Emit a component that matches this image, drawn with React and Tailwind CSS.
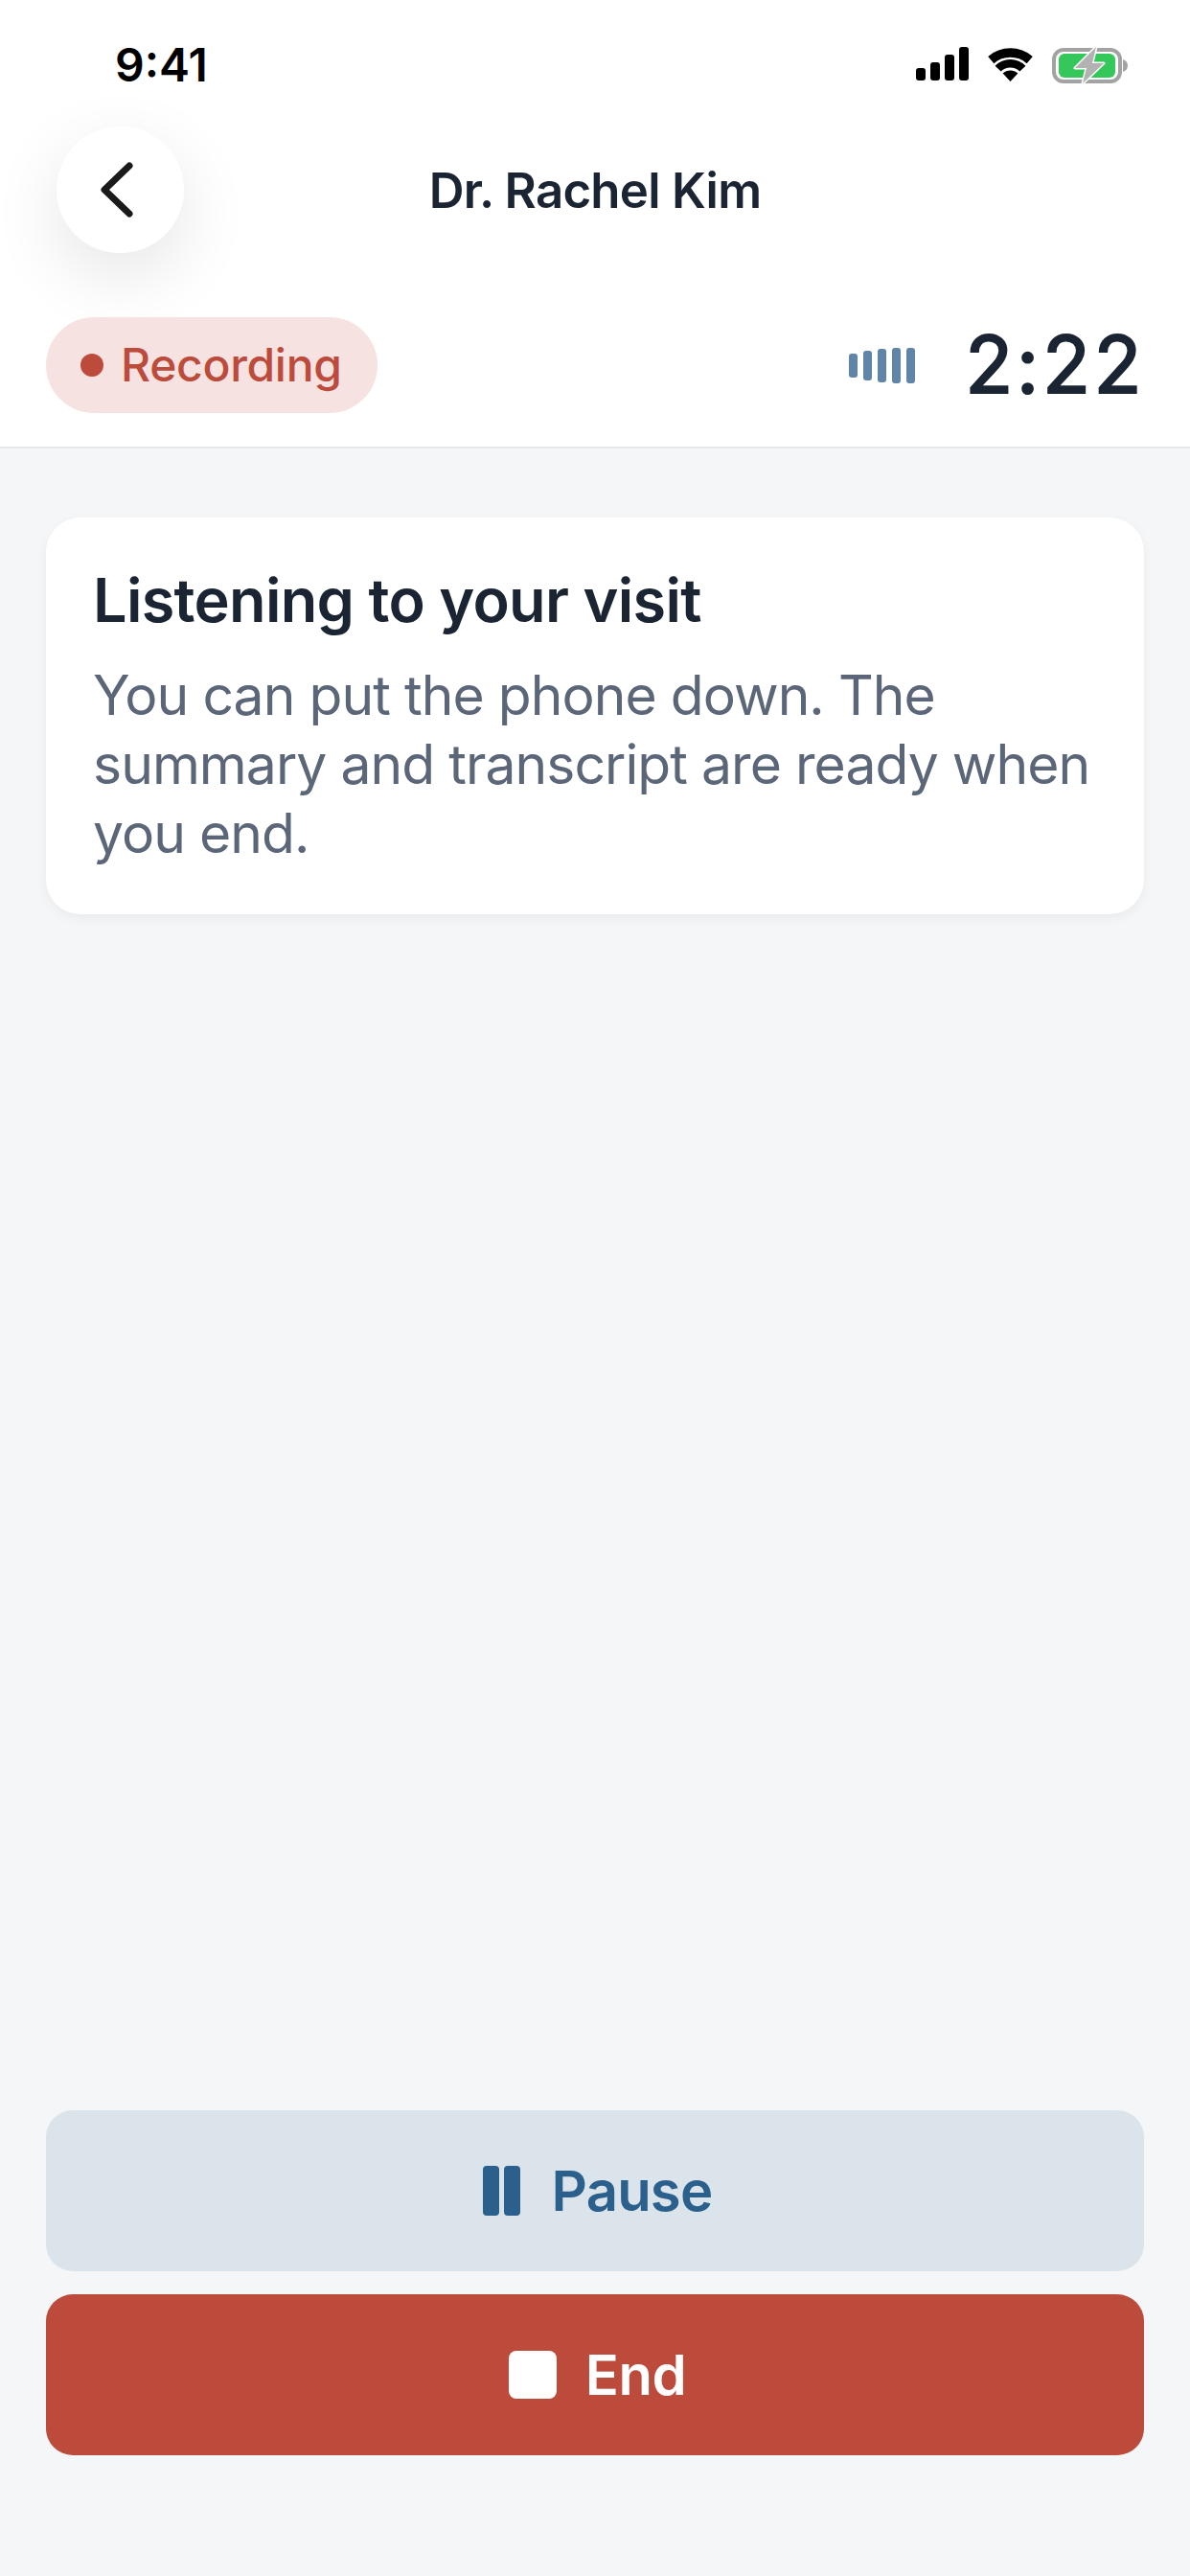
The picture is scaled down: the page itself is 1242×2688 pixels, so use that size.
import React from 'react';

const font = "font-['Inter','Liberation_Sans',sans-serif]";

const SignalIcon = () => (
    <svg width="55" height="36" viewBox="0 0 55 36" fill="#000">
        <rect x="0" y="22" width="10" height="13" rx="3" />
        <rect x="15" y="16" width="10" height="19" rx="3" />
        <rect x="30" y="8" width="10" height="27" rx="3" />
        <rect x="45" y="0" width="10" height="35" rx="3" />
    </svg>
);

const WifiIcon = () => (
    <svg width="47" height="36" viewBox="0 0 47 36" fill="none" stroke="#000">
        <path d="M3.3 13.6 A31 31 0 0 1 43.7 13.6" strokeWidth="9.5" />
        <path d="M10.6 22.6 A18 18 0 0 1 36.4 22.6" strokeWidth="8.5" />
        <path d="M23.5 36 L15.6 27.6 A11.5 11.5 0 0 1 31.4 27.6 Z" fill="#000" stroke="none" />
    </svg>
);

const BatteryIcon = () => (
    <svg width="80" height="39" viewBox="0 -1 80 39" fill="none">
        <rect x="2" y="2" width="69" height="33" rx="10" stroke="#a3a3a3" strokeWidth="4" />
        <rect x="7" y="6" width="59" height="25" rx="6" fill="#34c759" />
        <path d="M74 12 C77 13 79 15 79 18.5 C79 22 77 24 74 25 Z" fill="#a3a3a3" />
        <path d="M46 -1 L24 21 L36 21 L32 37 L54 16 L42 16 Z" fill="#b2b2b2" stroke="#fff" strokeWidth="3" strokeLinejoin="round" paintOrder="stroke" />
    </svg>
);

const BackIcon = () => (
    <svg width="34" height="58" viewBox="0 0 34 58" fill="none" stroke="#1a1a1a" strokeWidth="7" strokeLinecap="round" strokeLinejoin="round">
        <path d="M30 4 L4 29 L30 54" />
    </svg>
);

const levels = [25, 31, 35, 37, 37];

const App = () => {
    return (
        <div className={`${font} w-[1242px] h-[2688px] flex flex-col bg-[#f4f6f8]`}>
            <header className="bg-white border-b-2 border-[#e5e7eb]">
                <div className="h-[132px] pt-[49px] pl-[120px] pr-[64px] flex justify-between items-start">
                    <span className="text-[48px] leading-[37px] font-semibold text-black">9:41</span>
                    <div className="flex items-start gap-[20px]">
                        <SignalIcon />
                        <WifiIcon />
                        <BatteryIcon />
                    </div>
                </div>

                <div className="h-[132px] px-[59px] grid grid-cols-[1fr_auto_1fr] items-center">
                    <button className="w-[133px] h-[132px] rounded-full bg-white flex items-center justify-center pr-[8px] shadow-[0_24px_72px_rgba(0,0,0,0.1)]">
                        <BackIcon />
                    </button>
                    <h1 className="text-[51px] leading-none font-semibold tracking-[-0.75px] text-[#1b2433]">Dr. Rachel Kim</h1>
                </div>

                <div className="mt-[67px] pl-[48px] pr-[47px] pb-[35px] flex items-center justify-between">
                    <div className="h-[100px] w-[346px] rounded-full bg-[#f6e3e1] flex items-center pl-[36px] gap-[18px]">
                        <span className="w-[24px] h-[24px] rounded-full bg-[#bd4b3c]" />
                        <span className="text-[48px] font-medium tracking-[-0.3px] text-[#bd4b3c]">Recording</span>
                    </div>
                    <div className="flex items-center gap-[52px]">
                        <div className="flex items-center gap-[6px]">
                            {levels.map((h, i) => (
                                <span key={i} className="w-[9px] rounded-[3px] bg-[#5f85a8]" style={{ height: h }} />
                            ))}
                        </div>
                        <span className="text-[82px] leading-none font-normal tracking-[3.5px] text-[#1b2433] [-webkit-text-stroke:2px_#1b2433] [stroke-linejoin:round]">2:22</span>
                    </div>
                </div>
            </header>

            <main className="flex-1 flex flex-col px-[48px] pt-[72px] pb-[126px]">
                <section className="h-[414px] rounded-[36px] bg-white px-[49px] pt-[50px] shadow-[0_4px_12px_rgba(0,0,0,0.05)]">
                    <h2 className="text-[63px] leading-[72px] font-semibold tracking-[-0.7px] text-[#1b2433]">Listening to your visit</h2>
                    <p className="mt-[28px] text-[57px] leading-[72px] tracking-[-0.95px] text-[#5b6678]">
                        You can put the phone down. The summary and transcript are ready when you end.
                    </p>
                </section>

                <div className="mt-auto flex flex-col gap-[24px]">
                    <button className="h-[168px] pl-[5px] rounded-[28px] bg-[#dce4eb] flex items-center justify-center gap-[33px] text-[58px] font-semibold tracking-[-0.8px] text-[#2b5f8c]">
                        <span className="flex gap-[5px]">
                            <span className="w-[17px] h-[52px] rounded-[4px] bg-[#2b5f8c]" />
                            <span className="w-[17px] h-[52px] rounded-[4px] bg-[#2b5f8c]" />
                        </span>
                        Pause
                    </button>
                    <button className="h-[168px] pl-[5px] rounded-[28px] bg-[#bd4b3c] flex items-center justify-center gap-[30px] text-[58px] font-semibold tracking-[-0.5px] text-white">
                        <span className="w-[50px] h-[50px] rounded-[8px] bg-white" />
                        End
                    </button>
                </div>
            </main>
        </div>
    );
};

export default App;
